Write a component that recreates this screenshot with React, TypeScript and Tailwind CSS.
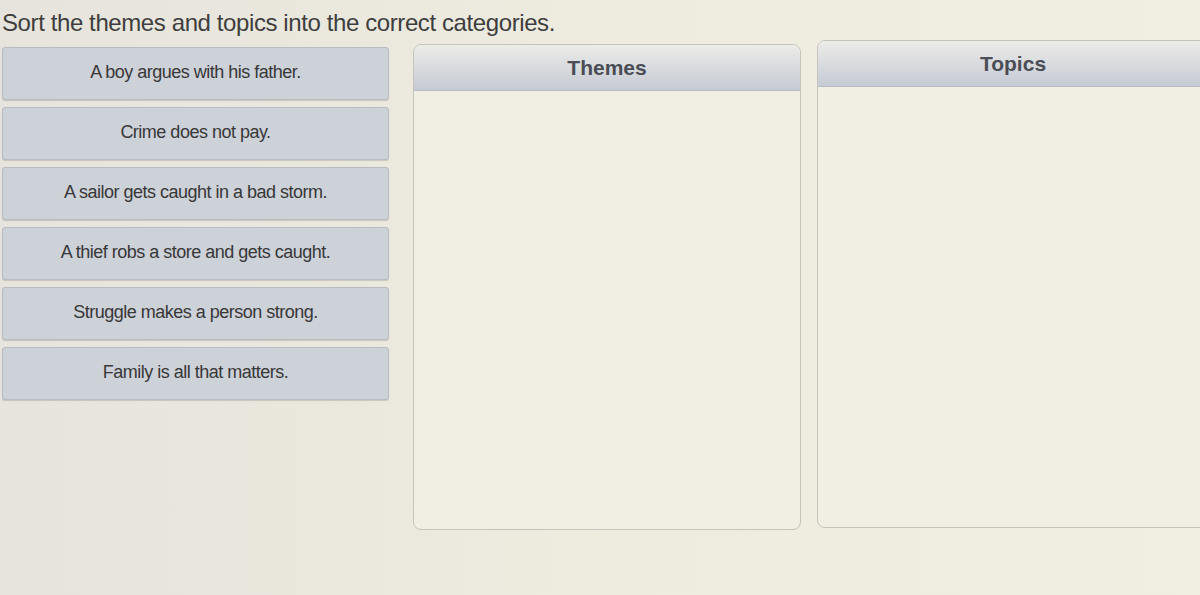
import React from 'react';

const items = [
  'A boy argues with his father.',
  'Crime does not pay.',
  'A sailor gets caught in a bad storm.',
  'A thief robs a store and gets caught.',
  'Struggle makes a person strong.',
  'Family is all that matters.',
];

function Bucket({ title, className }: { title: string; className: string }) {
  return (
    <div className={`shrink-0 flex flex-col rounded-[8px] border border-[#c4c4bc] bg-[#f1efe3] overflow-hidden ${className}`}>
      <div className="h-[46px] flex items-start justify-center pt-[7px] border-b border-[#b9bcc4] bg-gradient-to-b from-[#ecece8] to-[#c6cad4]">
        <span className="text-[21px] font-bold text-[#4a4d55]">{title}</span>
      </div>
      <div className="flex-1" />
    </div>
  );
}

export default function App() {
  return (
    <div
      className="w-[1200px] h-[595px] overflow-hidden bg-gradient-to-r from-[#e6e4dc] via-[#eeebdf] to-[#f1eee2] text-[#3c3c3c]"
      style={{ fontFamily: '"Liberation Sans", Arial, sans-serif' }}
    >
      <h1 className="pl-[2px] pt-[9px] h-[44px] text-[24px] leading-[28px] tracking-[-0.4px] text-[#3e3e3e]">
        Sort the themes and topics into the correct categories.
      </h1>
      <div className="flex items-start">
        <div className="shrink-0 ml-[2px] w-[387px] mt-[3px] flex flex-col gap-[7px]">
          {items.map((t) => (
            <div
              key={t}
              className="h-[53px] rounded-[3px] border border-[#b8bcc2] bg-[#cdd1d8] shadow-[0_1px_1px_rgba(0,0,0,0.15)] flex items-center justify-center pb-[2px] text-[18px] tracking-[-0.5px] text-[#383838]"
            >
              {t}
            </div>
          ))}
        </div>
        <Bucket title="Themes" className="ml-[24px] w-[388px] h-[486px]" />
        <Bucket title="Topics" className="ml-[16px] w-[392px] h-[488px] -mt-[4px]" />
      </div>
    </div>
  );
}
